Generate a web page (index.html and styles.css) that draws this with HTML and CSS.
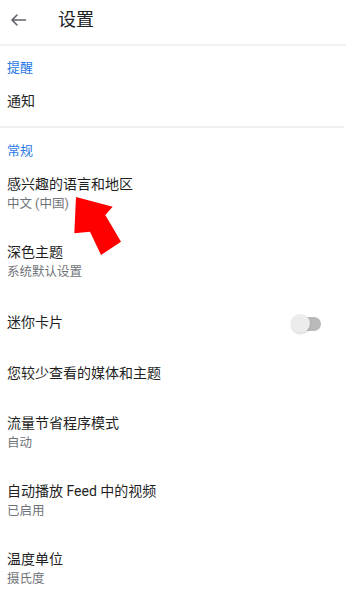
FILE: index.html
```html
<!DOCTYPE html>
<html lang="zh-CN">
<head>
<meta charset="utf-8">
<title>设置</title>
<link rel="stylesheet" href="styles.css">
</head>
<body>
<div class="page">
  <header class="topbar">
    <svg class="back" width="16" height="12" viewBox="0 0 16 12"><path d="M1 6H14.5M6 1L1 6L6 11" fill="none" stroke="#5f6368" stroke-width="1.6" stroke-linecap="round" stroke-linejoin="round"/></svg>
    <h1 class="title">设置</h1>
  </header>

  <section class="group divided">
    <div class="label">提醒</div>
    <div class="row"><div class="text"><div class="name">通知</div></div></div>
  </section>

  <section class="group">
    <div class="label">常规</div>
    <div class="row"><div class="text"><div class="name">感兴趣的语言和地区</div><div class="sub">中文 (中国)</div></div></div>
    <div class="row"><div class="text"><div class="name">深色主题</div><div class="sub">系统默认设置</div></div></div>
    <div class="row toggle-row"><div class="text"><div class="name">迷你卡片</div></div><div class="switch"><span class="track"></span><span class="thumb"></span></div></div>
    <div class="row"><div class="text"><div class="name">您较少查看的媒体和主题</div></div></div>
    <div class="row"><div class="text"><div class="name">流量节省程序模式</div><div class="sub">自动</div></div></div>
    <div class="row"><div class="text"><div class="name">自动播放 Feed 中的视频</div><div class="sub">已启用</div></div></div>
    <div class="row"><div class="text"><div class="name">温度单位</div><div class="sub">摄氏度</div></div></div>
  </section>

  <svg class="pointer" width="56" height="70" viewBox="0 0 56 70"><polygon points="6,7 42.7,16.7 35.3,25 51,51.7 31,65 20,41.7 4.3,43.3" fill="#ff0000"/></svg>
</div>
</body>
</html>
```
FILE: styles.css
```css
html, body {
  margin: 0;
  padding: 0;
  background: #ffffff;
}
body {
  font-family: Roboto, "Noto Sans CJK SC", sans-serif;
  color: #202124;
  overflow: hidden;
}
.page {
  position: relative;
  width: 346px;
  height: 603px;
  overflow: hidden;
}
.topbar {
  height: 46px;
  box-sizing: border-box;
  padding: 0 0 4px 11px;
  display: flex;
  align-items: center;
  border-bottom: 2px solid #f1f1f1;
}
.back {
  display: block;
}
.title {
  margin: 0 0 0 31px;
  font-size: 18px;
  font-weight: 400;
  line-height: 24px;
  color: #202124;
}
.group {
  padding: 14px 0 0 0;
}
.group + .group {
  padding-top: 15px;
}
.divided {
  border-bottom: 2px solid #f0f0f0;
  margin-right: 2px;
}
.label {
  padding-left: 7px;
  font-size: 13px;
  line-height: 16px;
  color: #2a78e4;
}
.row {
  display: flex;
  align-items: center;
  justify-content: space-between;
  padding: 15px 25px 15px 7px;
}
.name {
  font-size: 14px;
  line-height: 20px;
  color: #1f1f1f;
}
.sub {
  margin-top: 2px;
  font-size: 12.5px;
  line-height: 16px;
  color: #6f7378;
}
.switch {
  position: relative;
  width: 30px;
  height: 19px;
  margin-top: 4px;
}
.track {
  position: absolute;
  left: 2px;
  top: 2.5px;
  width: 28px;
  height: 14px;
  border-radius: 7px;
  background: #b9b9b9;
}
.thumb {
  position: absolute;
  left: 0;
  top: 0;
  width: 19px;
  height: 19px;
  border-radius: 50%;
  background: #ececec;
  box-shadow: 0 1px 2px rgba(0,0,0,0.18);
}
.pointer {
  position: absolute;
  left: 70px;
  top: 190px;
}
```
